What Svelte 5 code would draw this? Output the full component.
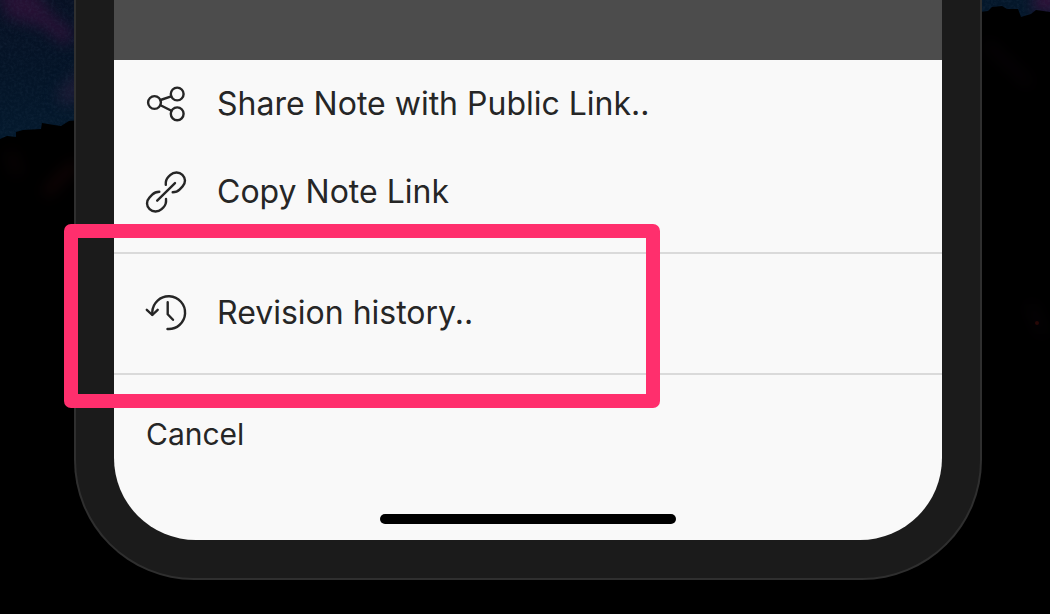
<script>
  let selected = $state('');
</script>

<main class="stage">
  <svg class="wallpaper" viewBox="0 0 1050 614" preserveAspectRatio="none" aria-hidden="true">
    <defs>
      <linearGradient id="sky" x1="0" y1="0" x2="0" y2="1">
        <stop offset="0" stop-color="#081124" />
        <stop offset="0.5" stop-color="#041427" />
        <stop offset="1" stop-color="#041a2e" />
      </linearGradient>
      <filter id="soft" x="-60%" y="-60%" width="220%" height="220%" color-interpolation-filters="sRGB">
        <feGaussianBlur stdDeviation="7" />
      </filter>
      <filter id="grain" x="0" y="0" width="100%" height="100%" color-interpolation-filters="sRGB">
        <feTurbulence type="fractalNoise" baseFrequency="0.35" numOctaves="3" seed="4" />
        <feColorMatrix values="0 0 0 0 0.3  0 0 0 0 0.4  0 0 0 0 0.5  0.6 0.5 0 0 -0.46" />
      </filter>
    </defs>
    <rect width="1050" height="614" fill="#000" />
    <rect width="110" height="145" fill="url(#sky)" />
    <rect x="960" width="90" height="20" fill="#04172a" />
    <g filter="url(#soft)">
      <path d="M-5 -12H34L50 12L76 34L66 46L42 27L8 18Z" fill="#261134" />
      <path d="M82 66L56 94L64 106L84 98Z" fill="#1b1a34" />
      <path d="M1034 -10H1060V12H1034Z" fill="#301239" />
    </g>
    <g filter="url(#grain)" opacity="0.3">
      <rect width="110" height="145" />
      <rect x="960" width="90" height="20" />
    </g>
    <path
      d="M0 139L7 136L16 137V132L23 130L41 129L42 123L54 125L61 126L69 121L80 120V614H0Z"
      fill="#000"
    />
    <path
      d="M980 12L988 11L992 7L1002 6L1007 9L1018 9L1021 17L1031 14L1036 10L1050 12V614H980Z"
      fill="#000"
    />
    <g filter="url(#soft)" fill="none" stroke-width="8">
      <path d="M76 164L61 177L46 194" stroke="#140506" />
      <path d="M10 152L18 174" stroke="#0c0305" />
      <path d="M986 43L1030 84M1030 304L1044 334" stroke="#070306" />
    </g>
    <circle cx="1037" cy="323" r="2" fill="#270806" />
  </svg>

  <section class="phone">
    <div class="screen">
      <div class="dimmed"></div>
      <div class="sheet">
        <div class="group">
          <button class="row" onclick={() => (selected = 'share')}>
            <svg class="icon" viewBox="0 0 40 40" aria-hidden="true">
              <circle cx="8.5" cy="18.5" r="6.4" />
              <circle cx="31.2" cy="10" r="6.4" />
              <circle cx="31.2" cy="29.8" r="6.4" />
              <path d="M14.5 16L25.2 12.3M14.5 21.2L25.5 26.8" />
            </svg>
            <span>Share Note with Public Link..</span>
          </button>
          <button class="row" onclick={() => (selected = 'copy')}>
            <svg class="icon" viewBox="0 0 40 40" aria-hidden="true">
              <path
                d="M19.8 12.8C19.4 9.2 20.4 6.8 22.6 4.6L24.4 2.9C27.8 -.2 33.2 -.3 36.4 2.8C39.8 6.2 39.8 11 36.6 14.4L33.8 17.3C31.6 19.5 29.6 20.2 26.7 20.2"
              />
              <path
                d="M13.3 19.8C10.4 19.8 8.4 20.5 6.2 22.7L3.4 25.6C.2 29 .2 33.8 3.6 37.2C6.8 40.3 12.2 40.2 15.6 37.1L17.4 35.4C19.6 33.2 20.4 30.6 20 27"
              />
              <path d="M11.2 28.7L29 11.1" />
            </svg>
            <span>Copy Note Link</span>
          </button>
        </div>

        <div class="group highlighted">
          <button class="row" onclick={() => (selected = 'history')}>
            <svg class="icon" viewBox="0 0 40 40" aria-hidden="true">
              <path d="M6.3 21.5V19A16.4 16.4 0 1 1 21.5 36" />
              <path d="M.8 16.8L6.3 22L11.7 16.8M21.7 9.2V21.2L27 26.8" />
            </svg>
            <span>Revision history..</span>
          </button>
          <div class="marker"></div>
        </div>

        <div class="group">
          <button class="row cancel" onclick={() => (selected = '')}>Cancel</button>
        </div>
        <div class="footer"><div class="home"></div></div>
      </div>
    </div>
  </section>
</main>

<style>
  :global(body) {
    margin: 0;
    background: #000;
  }

  .stage {
    position: relative;
    box-sizing: border-box;
    min-height: 100vh;
    padding: 0 68px 34px 74px;
    overflow: hidden;
    font-family: Inter, 'Liberation Sans', sans-serif;
  }

  .wallpaper {
    position: absolute;
    inset: 0;
    width: 100%;
    height: 100%;
  }

  .phone {
    position: relative;
    padding: 0 38px 38px;
    border: 2px solid #2f2f2f;
    border-top: 0;
    border-radius: 0 0 120px 120px;
    background: #1b1b1b;
  }

  .screen {
    border-radius: 0 0 82px 82px;
    background: #f9f9f9;
  }

  .dimmed {
    height: 60px;
    background: #4c4c4c;
  }

  .group {
    padding-bottom: 16px;
  }

  .group + .group {
    padding-top: 15px;
    border-top: 2px solid #dadada;
  }

  .highlighted {
    position: relative;
  }

  .row {
    display: flex;
    align-items: center;
    gap: 31px;
    width: 100%;
    height: 88px;
    padding: 0 32px;
    border: 0;
    background: none;
    color: #262626;
    font: 400 32px/40px Inter, 'Liberation Sans', sans-serif;
    text-align: left;
    cursor: pointer;
  }

  .cancel {
    font-size: 30px;
  }

  .icon {
    flex: none;
    width: 40px;
    height: 40px;
    overflow: visible;
    fill: none;
    stroke: #262626;
    stroke-width: 2.4;
    stroke-linecap: round;
    stroke-linejoin: round;
  }

  .marker {
    position: absolute;
    top: -30px;
    left: -50px;
    box-sizing: border-box;
    width: 72%;
    height: 184px;
    border: 14px solid #ff2f6d;
    border-radius: 7px;
    pointer-events: none;
  }

  .footer {
    display: flex;
    justify-content: center;
    padding: 20px 0 16px;
  }

  .home {
    width: 296px;
    height: 10px;
    border-radius: 5px;
    background: #000;
  }
</style>
